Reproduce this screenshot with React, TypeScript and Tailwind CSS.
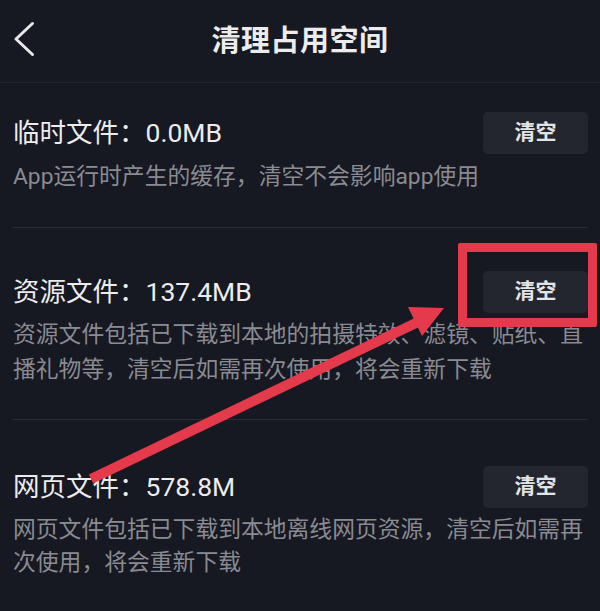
import React from "react";

const font = { fontFamily: "Roboto, 'Noto Sans CJK SC', sans-serif" };

function Section({
  title,
  desc,
  pt,
  descCls,
}: {
  title: string;
  desc: string;
  pt: string;
  descCls: string;
}) {
  return (
    <div className={`pl-[13px] pr-[12px] ${pt}`}>
      <div className="flex items-center justify-between h-[42px]">
        <div className="text-[26.5px] leading-none text-[#ececec]">{title}</div>
        <button className="w-[105px] h-[42px] rounded-[5px] bg-[#24262f] text-[21px] font-bold text-[#e4e4e4]">
          清空
        </button>
      </div>
      <div className={`mr-[-12px] text-[22.8px] text-[#8a8b91] ${descCls}`}>{desc}</div>
    </div>
  );
}

export default function App() {
  return (
    <div
      className="relative w-[600px] h-[611px] overflow-hidden bg-[#161822]"
      style={font}
    >
      <div className="relative h-[83px] flex items-center justify-center border-b border-[#23252e]">
        <svg
          className="absolute left-0 top-0"
          width="50"
          height="83"
          viewBox="0 0 50 83"
        >
          <path
            d="M32.5 23.5 L16 39 L32.5 54.5"
            fill="none"
            stroke="#e8e8e8"
            strokeWidth="3"
            strokeLinecap="round"
            strokeLinejoin="round"
          />
        </svg>
        <div className="text-[29px] font-bold text-[#ececec] mt-[2px] tracking-[0.5px]">
          清理占用空间
        </div>
      </div>

      <Section
        pt="pt-[29px]"
        descCls="mt-[5px] leading-[35px]"
        title="临时文件：0.0MB"
        desc="App运行时产生的缓存，清空不会影响app使用"
      />
      <div className="mx-[12px] mt-[33px] h-px bg-[#2a2c36]" />

      <Section
        pt="pt-[43px]"
        descCls="mt-[4px] leading-[35px]"
        title="资源文件：137.4MB"
        desc="资源文件包括已下载到本地的拍摄特效、滤镜、贴纸、直播礼物等，清空后如需再次使用，将会重新下载"
      />
      <div className="mx-[12px] mt-[32px] h-px bg-[#2a2c36]" />

      <Section
        pt="pt-[46px]"
        descCls="mt-[5px] leading-[33px]"
        title="网页文件：578.8M"
        desc="网页文件包括已下载到本地离线网页资源，清空后如需再次使用，将会重新下载"
      />

      <div className="absolute left-[458px] top-[243px] w-[139px] h-[84px] border-[9px] border-[#e53a4b] rounded-[2px]" />

      <svg
        className="absolute left-0 top-0 pointer-events-none"
        width="600"
        height="611"
        viewBox="0 0 600 611"
      >
        <line
          x1="91"
          y1="479"
          x2="418"
          y2="322"
          stroke="#e53a4b"
          strokeWidth="10"
        />
        <polygon points="444,308 408,307 422,336" fill="#e53a4b" />
      </svg>
    </div>
  );
}
